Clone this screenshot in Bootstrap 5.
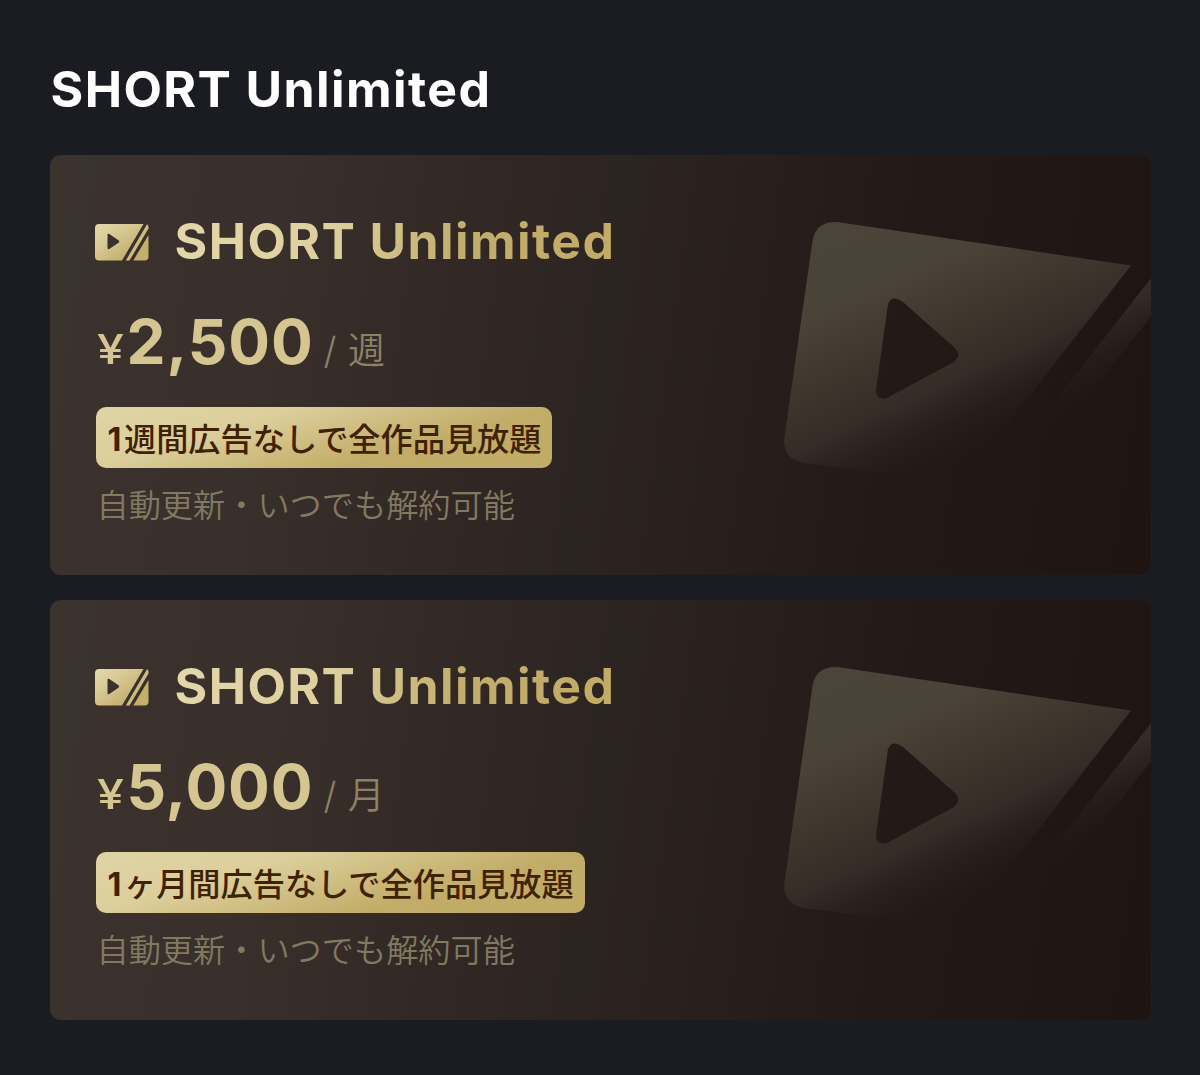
<!DOCTYPE html>
<html lang="ja">
<head>
  <meta charset="UTF-8">
  <meta name="viewport" content="width=device-width, initial-scale=1">
  <title>SHORT Unlimited</title>
  <link rel="stylesheet" href="https://cdn.jsdelivr.net/npm/bootstrap@5.3.0/dist/css/bootstrap.min.css">
  <style>
    body {
      font-family: Inter, "Noto Sans CJK JP", sans-serif;
      background-color: #1b1c22;
      padding: 59px 49px 0 49.5px;
    }

    .page-title {
      height: 60px;
      margin-bottom: 36px;
      padding-left: 1px;
      font-size: 50px;
      line-height: 60px;
      letter-spacing: 1.4px;
      font-weight: 700;
      white-space: nowrap;
    }

    .plan-list {
      gap: 25px;
    }

    .plan-card {
      height: 420px;
      padding: 56px 45px 0;
      border-radius: 11px;
      background: linear-gradient(98deg, #3b332e 0%, #392f2b 20%, #2c2421 50%, #231a17 75%, #1e1512 100%);
    }

    .plan-watermark {
      top: 0;
      left: 0;
    }

    .plan-head {
      height: 60px;
      gap: 26px;
    }

    .plan-icon {
      margin-top: 2px;
    }

    .plan-name {
      font-size: 50px;
      line-height: 60px;
      letter-spacing: 1.4px;
      font-weight: 700;
      color: transparent;
      background: linear-gradient(100deg, #e3d7ab 0%, #ddd09f 35%, #c2ad6b 65%, #c2ab66 100%);
      -webkit-background-clip: text;
      background-clip: text;
    }

    .plan-price {
      height: 76px;
      margin-top: 33px;
      padding-left: 2px;
      line-height: 76px;
      color: #d5c590;
    }

    .price-yen {
      width: 30px;
      font-size: 41px;
      font-weight: 500;
      transform: scaleX(1.18);
      transform-origin: left;
    }

    .price-amount {
      font-size: 62px;
      font-weight: 700;
      letter-spacing: 0.9px;
    }

    .price-unit {
      margin-left: 10px;
      font-size: 37px;
      font-weight: 350;
      letter-spacing: -0.5px;
      word-spacing: 2px;
      color: #8c8264;
    }

    .plan-label {
      height: 61px;
      margin-top: 27px;
      margin-left: 1px;
      padding: 0 11px 0 12px;
      border-radius: 10px;
      font-size: 32.2px;
      line-height: 65px;
      font-weight: 500;
      color: #402200;
      background: linear-gradient(164deg, #dfd4a6 0%, #dccf9c 30%, #c2ad68 68%, #c1ab66 100%);
    }

    .label-count {
      font-weight: 700;
      letter-spacing: 2.6px;
    }

    .plan-note {
      margin-top: 14px;
      padding-left: 2px;
      font-size: 32.2px;
      line-height: 47px;
      font-weight: 350;
      color: #827a60;
    }
  </style>
</head>
<body>

<svg class="position-absolute" width="0" height="0" aria-hidden="true">
  <defs>
    <linearGradient id="gold" x1="0" y1="0" x2="1" y2="1">
      <stop offset="0" stop-color="#e3d9ae"/>
      <stop offset=".35" stop-color="#d8ca94"/>
      <stop offset="1" stop-color="#b9a35d"/>
    </linearGradient>
    <linearGradient id="fade" gradientUnits="userSpaceOnUse" x1="786" y1="67" x2="901" y2="318">
      <stop offset="0" stop-color="#4b4438"/>
      <stop offset=".28" stop-color="#4a4337"/>
      <stop offset=".5" stop-color="#3f362d"/>
      <stop offset=".7" stop-color="#372e29" stop-opacity=".9"/>
      <stop offset="1" stop-color="#211815" stop-opacity="0"/>
    </linearGradient>
    <symbol id="short-icon" viewBox="0 0 54 38">
      <path fill="url(#gold)" fill-rule="evenodd" d="M4 1H48.500L27 37.500H4A4 4 0 0 1 0 33.500V5A4 4 0 0 1 4 1ZM12.500 12V25Q12.500 27 14.300 26L23.500 19.800Q25 18.500 23.500 17.200L14.300 11Q12.500 10 12.500 12Z"/>
      <path fill="#cdbc80" d="M52 1.300Q53.500 2 53.500 4V5.500L34.500 37.500H30.800Z"/>
      <path fill="#c3af6b" d="M53.500 12V33.500A4 4 0 0 1 49.500 37.500H38.300Z"/>
    </symbol>
  </defs>
</svg>

<h1 class="page-title text-white">SHORT Unlimited</h1>

<div class="plan-list d-flex flex-column" id="planList"></div>

<script src="https://cdn.jsdelivr.net/npm/bootstrap@5.3.0/dist/js/bootstrap.bundle.min.js"></script>
<script>
  const plans = [
    { price: "2,500", unit: "週", count: "1", label: "週間広告なしで全作品見放題" },
    { price: "5,000", unit: "月", count: "1", label: "ヶ月間広告なしで全作品見放題" }
  ];

  const planList = document.getElementById("planList");

  plans.forEach((plan) => {
    const card = document.createElement("section");
    card.className = "plan-card position-relative overflow-hidden";

    card.innerHTML = `
      <svg class="plan-watermark position-absolute" width="1102" height="420" viewBox="0 0 1102 420" aria-hidden="true">
        <path fill="url(#fade)" fill-rule="evenodd" d="M787 67L1081 110.500L925 311Q914 325 896 329L850 320L753 308Q732 303 734.500 282L762.500 86Q766 66 787 67ZM838 149L826 235Q826 246 837 243L904 207Q912 200 905 193L853 147Q842 139 838 149Z"/>
        <path fill="url(#fade)" d="M1102 122V160L973 325H943Z"/>
      </svg>
      <div class="plan-head d-flex align-items-center">
        <svg class="plan-icon" width="54" height="38" aria-hidden="true"><use href="#short-icon"/></svg>
        <div class="plan-name">SHORT Unlimited</div>
      </div>
      <div class="plan-price d-flex align-items-baseline">
        <span class="price-yen">¥</span>
        <span class="price-amount">${plan.price}</span>
        <span class="price-unit">/ ${plan.unit}</span>
      </div>
      <div class="d-flex">
        <div class="plan-label text-nowrap"><span class="label-count">${plan.count}</span>${plan.label}</div>
      </div>
      <div class="plan-note">自動更新・いつでも解約可能</div>
    `;

    planList.appendChild(card);
  });
</script>

</body>
</html>
